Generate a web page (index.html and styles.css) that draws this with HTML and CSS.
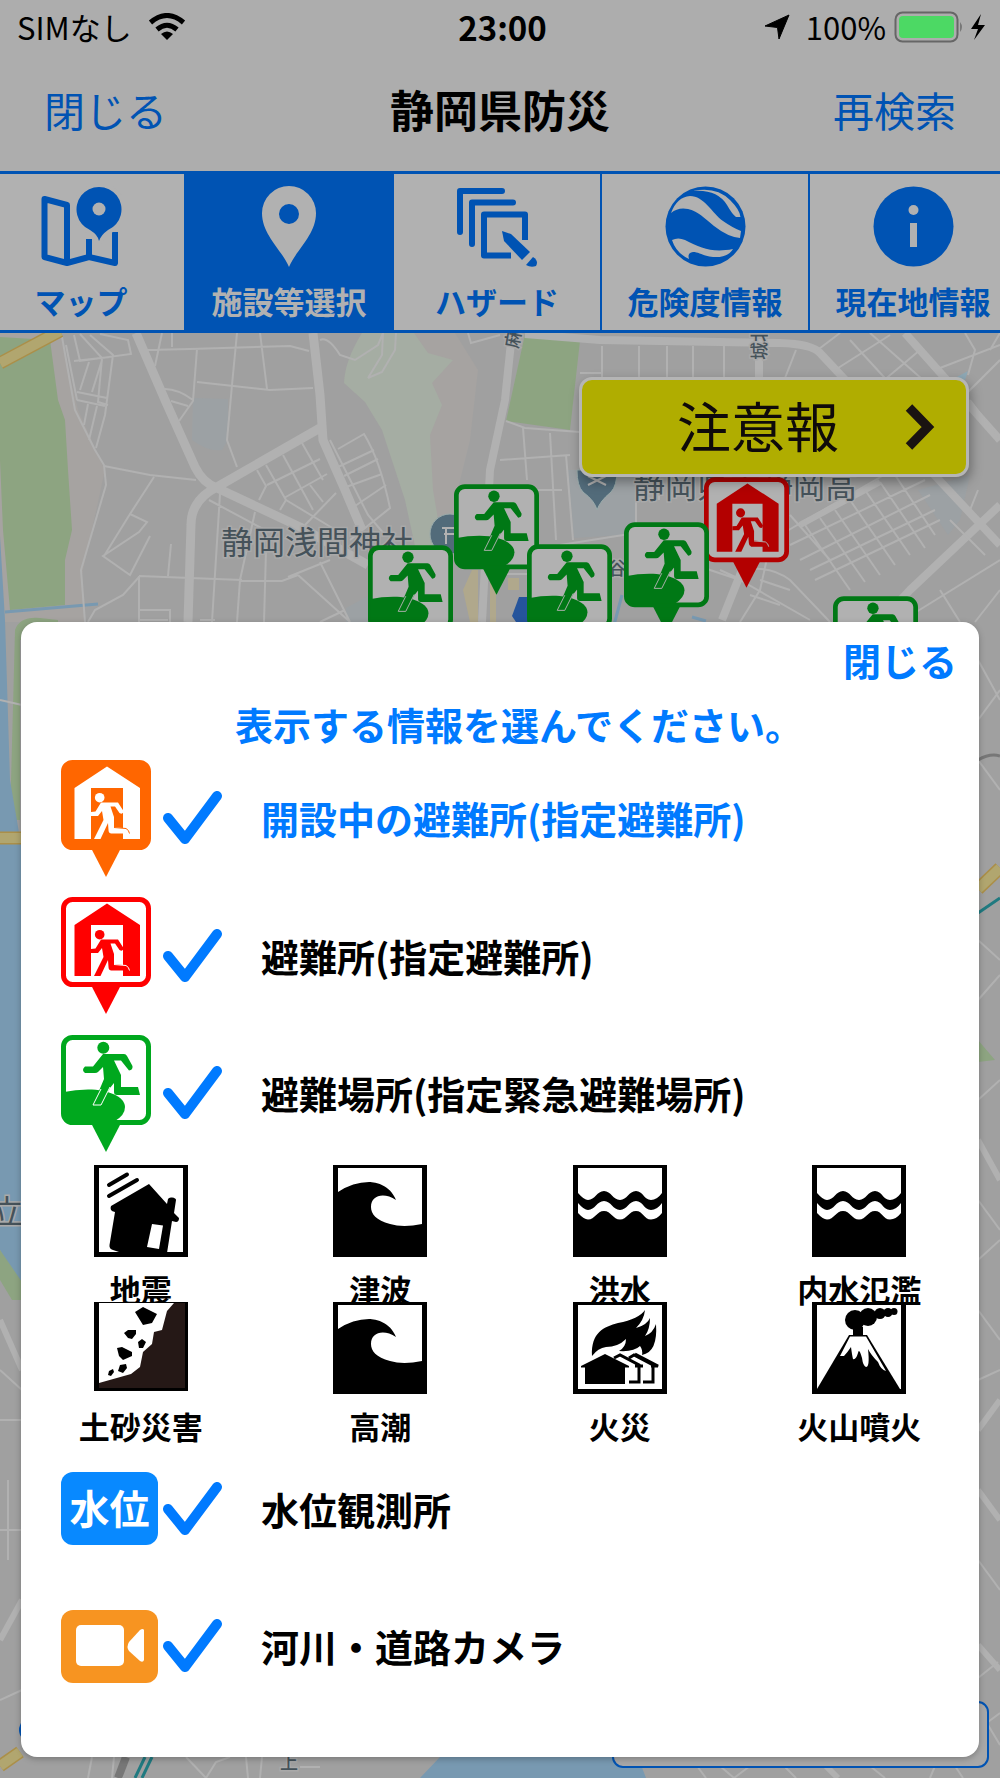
FILE: index.html
```html
<!DOCTYPE html>
<html lang="ja">

<head>
    <meta charset="UTF-8">
    <meta name="viewport" content="width=device-width, initial-scale=1.0">
    <title>静岡県防災</title>
    <link rel="stylesheet" href="styles.css">
</head>

<body>
    <!-- shared icons -->
    <svg class="defs" aria-hidden="true">
        <symbol id="pin-shelter" viewBox="0 0 90 117">
            <path d="M30 88H60L45 117Z" fill="currentColor" />
            <rect x="2.500" y="2.500" width="85" height="85" rx="9" class="pin-inside" stroke="currentColor" stroke-width="5" />
            <path class="pin-mark" d="M46 6.500L79 28V79H62V28H30V79H13.500V28Z" />
            <g class="pin-mark">
                <circle cx="38.700" cy="37.700" r="4.800" />
                <path d="M40 42.500H57L62.500 51Q62 55 58.500 53L54 46.500H49.500L53 57V67L66 68.500Q70 71 68.500 73.500H50Q47.500 73 47.500 70L47 63L39.500 79H33L42.500 60L41 51L37 56H30V52L34.500 51.500Z" />
            </g>
            <path d="M53 67.500L65 68.500Q68 70 68.500 73.500" fill="none" class="pin-line" />
        </symbol>
        <symbol id="pin-area" viewBox="0 0 90 117">
            <path d="M30 88H60L45 117Z" fill="currentColor" />
            <rect x="2.500" y="2.500" width="85" height="85" rx="9" class="pin-inside" stroke="currentColor" stroke-width="5" />
            <path d="M3 57Q14 54.500 27 54.500C48 54.500 64 62 64 72Q64 80 54 86H10Q3 86 3 78Z" fill="currentColor" />
            <g fill="currentColor">
                <circle cx="42.300" cy="12.700" r="6" />
                <path d="M42 19H63Q65 19 66 21L71.500 31Q72 35 68 35.500L60 25.500H53L60 40V52H77L79 60H56Q53 60 53 57V48L49 53L40 70H32L43 44L42 32L37 37Q36 38 34 38H24Q20 35 24 31.500H32Z" />
            </g>
            <path d="M49 52L40 70H32L40 54" fill="none" class="pin-line" />
        </symbol>
        <symbol id="wave" viewBox="0 0 94 92">
            <path d="M0 0H94V92H0Z" />
            <path fill="#fff" d="M5 3H89V59Q70 63 57 59C43 55 38 49 38 42C38 30 51 27 63 35C57 20 43 17 36 17Q20 17 5 27Z" />
        </symbol>
        <symbol id="flood" viewBox="0 0 94 92">
            <path d="M0 0H94V92H0Z" />
            <path fill="#fff" d="M5 3H89V28Q84 35 78 35C71 35 70 26 63 26S54 35 47 35S38 26 31 26S22 35 15 35Q11 35 5 28Z" />
            <path fill="#fff" d="M5 38Q11 45 15 45C22 45 24 36 31 36S40 45 47 45S56 36 63 36S71 45 78 45Q84 45 89 38V48Q84 54.500 78 54.500C71 54.500 70 46 63 46S54 54.500 47 54.500S38 46 31 46S22 54.500 15 54.500Q11 54.500 5 48Z" />
        </symbol>
    </svg>

    <header class="top">
        <div class="status">
            <div class="status-left">
                <span>SIMなし</span>
                <svg width="38" height="28" viewBox="0 0 38 28" fill="none" stroke="#000" stroke-width="5">
                    <path d="M2.500 9.500Q19-4.500 35.500 9.500" />
                    <path d="M9 16.500Q19 8 29 16.500" />
                    <path d="M19 27L13 21Q19 16 25 21Z" fill="#000" stroke="none" />
                </svg>
            </div>
            <span class="clock">23:00</span>
            <div class="status-right">
                <svg width="26" height="26" viewBox="0 0 26 26">
                    <path d="M25 1L15 25L13.500 13.500L1 12Z" stroke="#000" stroke-linejoin="round" />
                </svg>
                <span>100%</span>
                <svg width="94" height="32" viewBox="0 0 94 32">
                    <rect x="1.500" y="1.500" width="62" height="29" rx="7" fill="none" stroke="#666" stroke-width="2" />
                    <rect x="5" y="5" width="55" height="22" rx="4" fill="#4cd964" />
                    <path d="M66 11Q70 16 66 21Z" fill="#777" />
                    <path d="M87 3L77 18H84L80 29L91 14H84Z" />
                </svg>
            </div>
        </div>
        <div class="navbar">
            <button type="button" class="nav-button">閉じる</button>
            <h1>静岡県防災</h1>
            <button type="button" class="nav-button">再検索</button>
        </div>
    </header>

    <div class="tabs-clip">
        <nav class="tabs">
            <button type="button" class="tab">
                <svg width="81" height="81" viewBox="0 0 81 81" fill="none" stroke="currentColor" stroke-width="6" stroke-linejoin="round">
                    <path d="M26 77L3.500 71V13L26 19ZL48 71L74 77V46" />
                    <path d="M48 53V71" />
                    <path d="M58 55Q57 49 49 44A22.500 22.500 0 1 1 67 44Q60 49 58 55Z" fill="currentColor" stroke="#b1b1b1" stroke-width="8" />
                    <path d="M58 55Q57 49 49 44A22.500 22.500 0 1 1 67 44Q60 49 58 55Z" fill="currentColor" stroke="none" />
                    <circle cx="58" cy="23" r="6.500" fill="#b1b1b1" stroke="none" />
                </svg>
                <span>マップ</span>
            </button>
            <button type="button" class="tab active">
                <svg width="54" height="81" viewBox="0 0 54 81" fill="currentColor">
                    <path fill-rule="evenodd" d="M27 81C20 64 0 49 0 27A27 27 0 0 1 54 27C54 49 34 64 27 81ZM27 18A10 10 0 1 0 27 38A10 10 0 1 0 27 18Z" />
                </svg>
                <span>施設等選択</span>
            </button>
            <button type="button" class="tab">
                <svg width="81" height="81" viewBox="0 0 81 81" fill="none" stroke="currentColor" stroke-width="6" stroke-linecap="round" stroke-linejoin="round">
                    <path d="M3 46V5H45M15 58V16.500H56" />
                    <path d="M68 54V28.500H27V69.500H54" stroke-linecap="butt" />
                    <path d="M45 45L54 48L73 66L65 74L47 55Z" fill="currentColor" stroke="none" />
                    <path d="M76 71Q82 75 79 80Q74 82 69 79Z" fill="currentColor" stroke="none" />
                </svg>
                <span>ハザード</span>
            </button>
            <button type="button" class="tab">
                <svg width="81" height="81" viewBox="0 0 81 81">
                    <circle cx="40.500" cy="40.500" r="40" fill="currentColor" />
                    <g fill="#b1b1b1">
                        <path d="M6 27Q12 11 25 10C39 10 47 27 58 35Q68 42 76 45L75 52Q63 51 49 40C39 32 33 25 23 23Q13 21 6 27Z" />
                        <path d="M28 5Q51 0 65 14Q75 24 75.500 31H71Q67 28 62 19Q52 3 28 5Z" />
                        <path d="M7 54Q13 51 20 54C36 62 47 67 68 63Q63 72 48 71C38 70 34 66 28 66Q22 67 24 73Q11 67 7 54Z" />
                    </g>
                </svg>
                <span>危険度情報</span>
            </button>
            <button type="button" class="tab">
                <svg width="81" height="81" viewBox="0 0 81 81">
                    <circle cx="40.500" cy="40.500" r="40" fill="currentColor" />
                    <circle cx="40.500" cy="24" r="5" fill="#b1b1b1" />
                    <path d="M37 37H44V61H37Z" fill="#b1b1b1" />
                </svg>
                <span>現在地情報</span>
            </button>
        </nav>
    </div>

    <main class="map-area">
        <svg class="map" viewBox="0 333 1000 1445" preserveAspectRatio="xMidYMin slice" aria-hidden="true">
            <rect y="333" width="1000" height="1445" fill="#a0a0a0" />
            <!-- land -->
            <path fill="#a6a3a1" d="M0 333H60L78 410L105 470L82 575L85 622H0Z" />
            <path fill="#a6a3a1" d="M410 333H455L478 370L470 440L455 500V560H420Z" />
            <path fill="#8da481" d="M0 337L50 340L58 400L65 420L68 470L72 530L65 560V605L10 610L3 530L0 460Z" />
            <path fill="#8da481" d="M15 630Q20 616 40 618L58 620V640H20V820H10Z" />
            <path fill="#a5ada3" d="M362 333H414L428 353L453 360L432 383L442 405L430 435L433 490L445 560H418L405 500L382 430L365 402L344 383Q345 360 362 333Z" />
            <path fill="#8da481" d="M525 334L580 341L570 430L506 421Z" />
            <path fill="#9ca1a4" d="M193 398L228 399V440L222 450Q208 452 192 440Z" />
            <path fill="#9ca1a4" d="M568 470H637V534L574 538ZM918 490L970 475L960 520L948 535ZM346 608L368 596V622H346Z" />
            <path fill="#8ea8b5" d="M955 378L968 371L965 380Z" />
            <path fill="#b0a88c" d="M472 570H478V622H470L463 590ZM490 570V622H496V570ZM508 578H519V590H508Z" />
            <!-- water -->
            <path fill="#7899b1" d="M0 536L5 620L10 780L22 850V1290L0 1250ZM560 1757H638L646 1778H420L440 1757Z" />
            <path d="M5 612L98 604M622 595L614 625M692 617L706 621" fill="none" stroke="#7899b1" stroke-width="3" />
            <path fill="#8da481" d="M0 1250L22 1282V1300H12L0 1280ZM978 1040L995 1060L978 1062Z" />
            <!-- main roads -->
            <g fill="none" stroke="#b1b1b1" stroke-linejoin="round">
                <path stroke-width="9" d="M136 333L165 400L195 467Q203 483 217 488L300 527L368 565M217 487L320 428M313 333L320 395L323 440L345 490L362 530M217 487Q191 500 191 525L188 622" />
                <path stroke-width="8" d="M512 333L505 400L490 470L482 622M525 334L600 340L780 343Q812 344 820 353L1000 545M905 333L1000 440M759 340V378M722 620L742 570M1000 505L910 590L880 622" />
                <path stroke-width="6" d="M978 1140L1000 1180M978 1430L1000 1400M978 1490L1000 1520M978 1645L1000 1670M0 1320L22 1370M0 1640L22 1600M820 1760L838 1778M800 525L880 482" />
            </g>
            <!-- side streets -->
            <g fill="none" stroke="#b1b1b1" stroke-width="2">
                <path d="M62 337L75 410L95 450L104 465L106 485L81 570L85 622M66 345L77 400M74 335L80 361L131 354L128 340L100 334M80 334L102 358L98 402L108 405M90 335L113 355L105 415L96 448M74 361L110 357M89 362L80 390M102 360L92 392M77 392L107 398M77 400L105 406M88 404L84 425M97 406L89 440" />
                <path d="M148 350L190 349L290 346L309 351M162 333L155 366M172 333V347M197 349L193 401L179 421M165 389Q178 389 193 400M171 401L188 406M197 382L270 390L313 388M237 333L232 385L227 440L237 467M260 333L267 389M320 340Q328 336 340 355L355 360L378 345L383 333M383 333L382 355L368 378M396 333L395 350L382 372L368 378M468 333L471 343L500 335" />
                <path d="M104 466L150 475L196 480M154 477L130 514L147 522L139 532L103 556L130 575L150 536M130 514L104 556M139 576L242 580M220 494L212 622M209 500L265 530M255 512L240 580L237 622M266 550L264 622M171 544L168 576M139 576V622M139 577L123 595L95 610L88 622M139 610H170V622M140 620H168M200 620H215" />
                <path d="M257 470L266 486L259 500M266 465L286 500L280 510M283 455L313 510M302 443L323 480M267 485L320 459M284 498L327 474M286 500L334 529M305 525L336 493M310 485L323 502M330 440L368 515L385 535M338 449L364 434Q380 460 390 508L350 540M338 467L374 450M344 476L378 459M346 487L382 474M355 506L386 485M298 575L350 622M320 562L350 622M298 575L282 581H240M345 610L320 622M288 577L330 560" />
                <path d="M580 373H602M602 346V380M639 346V380M667 346V380M693 346V380M724 346V380M506 421L525 428L580 432M523 428L527 480M550 433L556 540M500 460L570 455M566 455L573 540M500 490H562M560 545L636 533M636 480V534M659 480V500M500 574H530M680 560L740 580L810 620M742 580L720 570" />
                <path d="M840 333L815 352M796 350L785 378M850 340L905 400M870 333L940 395M920 350L870 392M890 335L835 370M965 333L975 350L968 375M1000 345L940 368M1000 360L960 400M970 400L1000 440M1000 333L990 350" />
                <path d="M780 535L910 460M790 545L925 480M800 560L930 495M810 570L935 510M815 580L940 520M805 525L850 590M820 518L865 582M835 510L880 575M850 500L895 565M865 490L910 555M880 482L925 548M895 475L935 535M745 570Q770 565 790 580L830 622M770 545L760 590L740 622M790 590L760 580M780 605L750 595M790 515L830 560M950 520L985 555M970 510L978 490M1000 560L900 622M940 590L960 622M1000 590L975 622" />
                <path d="M978 660L1000 700M978 720L1000 690M978 760L1000 790M978 940L1000 960M978 1000L1000 975M978 1100L1000 1080M978 1200L1000 1230M978 1260L1000 1240M978 1310L1000 1340M978 1380L1000 1370M978 1560L1000 1590M978 1678L998 1662M988 1725L1000 1745M988 1722L1000 1713M0 700L22 705M0 1370L22 1390M0 1420H22M8 1480V1560M0 1530H22M0 1700L22 1690" />
                <path d="M92 1757L88 1778M114 1757L112 1778M125 1757L122 1778M186 1757L206 1778L216 1762L230 1757M246 1757L248 1778M262 1757L260 1778M300 1767H320M697 1766L706 1778M720 1766L734 1778L750 1766M784 1766L796 1778M870 1766L885 1778M930 1778L935 1766M955 1766L963 1778" />
            </g>
            <g fill="none">
                <path d="M0 363L60 331M0 838H22M978 889L1000 868M0 1766L20 1752" stroke="#ab8f49" stroke-width="13" />
                <path d="M0 363L60 331M0 838H22M978 889L1000 868M0 1766L20 1752" stroke="#b1a66f" stroke-width="10" />
                <path d="M978 913L1000 898M135 1778L145 1757M142 1778L152 1757" stroke="#207a80" stroke-width="3" />
                <path d="M118 1778L126 1757" stroke="#777" stroke-width="8" />
                <path d="M978 760Q990 753 1000 756" stroke="#777" stroke-width="3" />
            </g>
            <!-- place names -->
            <g class="place">
                <text x="221" y="554">静岡浅間神社</text>
                <text x="633" y="498">静岡県立静岡高</text>
                <text x="-41" y="1223">県立</text>
            </g>
            <g class="place small">
                <text x="766" y="360" transform="rotate(-90 766 360)">城北</text>
                <text x="518" y="349" transform="rotate(-80 518 349)">麻機</text>
                <text x="608" y="575">谷通</text>
                <text x="280" y="1769">上</text>
            </g>
            <circle cx="450" cy="534" r="20" fill="#526b7a" stroke="#9aa" />
            <path d="M442 528H460M444 534H458M446 528V544" stroke="#b1b1b1" stroke-width="2" />
            <path d="M597 510Q595 501 583 492Q577 486 577 470H617Q617 486 611 492Q600 501 597 510Z" fill="#526b7a" stroke="#9aa" />
            <path d="M588 476L606 485M606 476L588 485" stroke="#b1b1b1" stroke-width="2" />
            <path d="M519 597H540V622H516L512 616Z" fill="#25549c" />
            <circle cx="31" cy="1730" r="12" fill="#0053b3" />
            <rect x="613" y="1702" width="375" height="65" rx="10" fill="#a8a8a8" stroke="#0053b3" stroke-width="2" />
            <!-- facilities -->
            <g class="pin dim green">
                <use href="#pin-area" x="454" y="484" width="85" height="111" />
                <use href="#pin-area" x="368" y="545" width="85" height="111" />
                <use href="#pin-area" x="527" y="544" width="85" height="111" />
                <use href="#pin-area" x="833" y="596" width="85" height="111" />
            </g>
            <g class="pin dim red">
                <use href="#pin-shelter" x="704" y="477" width="85" height="111" />
            </g>
            <g class="pin dim green">
                <use href="#pin-area" x="624" y="522" width="85" height="111" />
            </g>
        </svg>

        <button type="button" class="alert">
            <span>注意報</span>
            <svg width="30" height="46" viewBox="0 0 30 46" fill="none" stroke="#1a1311" stroke-width="9">
                <path d="M4 3.500L23 23L4 42.500" />
            </svg>
        </button>

        <section class="panel">
            <button type="button" class="panel-close">閉じる</button>
            <h2>表示する情報を選んでください。</h2>
            <div class="list">
                <label class="row with-pin highlight">
                    <svg class="pin filled" width="90" height="117"><use href="#pin-shelter" /></svg>
                    <input type="checkbox" class="check" checked>
                    <span>開設中の避難所(指定避難所)</span>
                </label>
                <label class="row with-pin">
                    <svg class="pin red" width="90" height="117"><use href="#pin-shelter" /></svg>
                    <input type="checkbox" class="check" checked>
                    <span>避難所(指定避難所)</span>
                </label>
                <label class="row with-pin">
                    <svg class="pin green" width="90" height="117"><use href="#pin-area" /></svg>
                    <input type="checkbox" class="check" checked>
                    <span>避難場所(指定緊急避難場所)</span>
                </label>
                <ul class="hazards">
                    <li>
                        <svg width="94" height="92" viewBox="0 0 94 92">
                            <path d="M0 0H94V92H0Z" />
                            <path fill="#fff" d="M5 3H89V87H5Z" />
                            <path d="M15 20L33 9.500M15 31L43 15" stroke="#000" stroke-width="4" stroke-linecap="round" />
                            <path d="M17 41L55 19L73 39L74 34Q75 32 78 32.500Q82 33 82 35L80 48L85 53Q85 57 82 57L78 56L73 88H28L19 85Q15 84 15.500 80L21 47Q15 46 17 41Z" />
                            <path fill="#fff" d="M58 59L69 60.500L65 84L53 82Z" />
                        </svg>
                        <span>地震</span>
                    </li>
                    <li>
                        <svg width="94" height="92"><use href="#wave" /></svg>
                        <span>津波</span>
                    </li>
                    <li>
                        <svg width="94" height="92"><use href="#flood" /></svg>
                        <span>洪水</span>
                    </li>
                    <li>
                        <svg width="94" height="92"><use href="#flood" /></svg>
                        <span>内水氾濫</span>
                    </li>
                    <li>
                        <svg width="94" height="92" viewBox="0 0 94 92">
                            <path d="M0 0H94V89H0Z" />
                            <path fill="#fff" d="M5 1H91V86H5Z" />
                            <path fill="#251816" d="M80 1L73 9L68 28L60 30L58 42L49 50L46 65L37 72L5 81V86H91V1Z" />
                            <path d="M41 10L49 5L63 12L58 21L49 23ZM30 31L34 28L42 28L42 32L38 37L34 36ZM44 40L48 37L52 40L49 46L45 46ZM23 46L28 45L38 50L38 54L29 58L25 54ZM26 63L32 62L33 66L29 71L24 69ZM15 69L19 67L20 70L17 74L14 73Z" />
                        </svg>
                        <span>土砂災害</span>
                    </li>
                    <li>
                        <svg width="94" height="92"><use href="#wave" /></svg>
                        <span>高潮</span>
                    </li>
                    <li>
                        <svg width="94" height="92" viewBox="0 0 94 92">
                            <path d="M0 0H94V92H0Z" />
                            <path fill="#fff" d="M5 3H89V87H5Z" />
                            <path d="M19 54C18 30 31 25 45 21Q66 17 72 8Q71 18 63 26Q74 23 77 16Q77 27 72 34Q80 31 83 22Q85 50 69 53Q70 48 67 44Q61 50 46 49Q53 45 53 37Q45 45 33 45Q25 46 19 54Z" />
                            <path d="M8 64L32 52L56 64V65.500H52V82H12V65.500H8Z" />
                            <path d="M41 56L47 53L66 63V80H56M56 56L61 53L80 63V80H70M62 64H70M78 64H85L62 52" fill="none" stroke="#000" stroke-width="3" />
                        </svg>
                        <span>火災</span>
                    </li>
                    <li>
                        <svg width="94" height="92" viewBox="0 0 94 92">
                            <path d="M0 0H94V92H0Z" />
                            <path fill="#fff" d="M5 3H89V87H5Z" />
                            <circle cx="43" cy="18" r="10" />
                            <circle cx="56" cy="15" r="9" />
                            <circle cx="68" cy="11.500" r="5.500" />
                            <circle cx="76" cy="10.500" r="4.500" />
                            <circle cx="82" cy="9.500" r="3.500" />
                            <path d="M41 25H51V33H41Z" />
                            <path d="M37 33H55L88 87H5Z" />
                            <path fill="#fff" d="M38 34.500H54L74 69Q69 68 66 60Q59 53 56 47Q58 65 54 65Q51 64 50 56Q47 45 46 51Q44 58 41 57Q40 53 39 45Q35 51 32 54L28 54Z" />
                        </svg>
                        <span>火山噴火</span>
                    </li>
                </ul>
                <label class="row">
                    <span class="badge">水位</span>
                    <input type="checkbox" class="check" checked>
                    <span>水位観測所</span>
                </label>
                <label class="row">
                    <span class="badge camera">
                        <svg width="70" height="42" viewBox="0 0 70 42" fill="#fff">
                            <rect x="1" y="0" width="48" height="41" rx="5" />
                            <path d="M69 5V35Q68 38 65 36L54 26Q51 22 54 17L65 5Q68 3 69 5Z" />
                        </svg>
                    </span>
                    <input type="checkbox" class="check" checked>
                    <span>河川・道路カメラ</span>
                </label>
            </div>
        </section>
    </main>
</body>

</html>
```
FILE: styles.css
```css
* {
    margin: 0;
    padding: 0;
    box-sizing: border-box;
}

body {
    min-height: 100vh;
    display: flex;
    flex-direction: column;
    background: #adadad;
    color: #000;
    font-family: "Noto Sans CJK JP", "Noto Sans", sans-serif;
    overflow-x: hidden;
}

button {
    border: none;
    background: none;
    font-family: inherit;
    cursor: pointer;
}

svg {
    display: block;
    flex: none;
}

.defs {
    position: absolute;
    width: 0;
    height: 0;
}

/* status bar and title */
.status {
    display: grid;
    grid-template-columns: 1fr auto 1fr;
    align-items: center;
    height: 54px;
    padding: 0 12px 0 17px;
    font-size: 31px;
    line-height: 52px;
}

.status-left,
.status-right {
    display: flex;
    align-items: center;
    gap: 16px;
}

.status-right {
    justify-content: flex-end;
}

.status-right span {
    margin-right: -8px;
}

.clock {
    font-size: 33px;
    font-weight: bold;
}

.navbar {
    display: grid;
    grid-template-columns: 1fr auto 1fr;
    align-items: center;
    height: 117px;
    padding: 0 44px 8px;
}

.navbar h1 {
    font-size: 44px;
    line-height: 64px;
}

.nav-button {
    justify-self: start;
    color: #0053b3;
    font-size: 41px;
    font-weight: 400;
    line-height: 60px;
}

.nav-button:last-child {
    justify-self: end;
}

/* tabs, the row runs past both edges */
.tabs-clip {
    overflow: hidden;
    border-top: 3px solid #0053b3;
    border-bottom: 3px solid #0053b3;
    background: #b1b1b1;
}

.tabs {
    display: flex;
    width: calc(100% + 40px);
    margin-left: -22px;
}

.tab {
    flex: 1;
    display: flex;
    flex-direction: column;
    align-items: center;
    gap: 12px;
    height: 156px;
    padding-top: 12px;
    border-right: 2px solid #0053b3;
    color: #0053b3;
    font-size: 31px;
    font-weight: bold;
    line-height: 44px;
}

.tab.active {
    background: #0053b3;
    color: #b1b1b1;
}

/* map */
.map-area {
    flex: 1;
    display: flex;
    flex-direction: column;
    position: relative;
    padding: 44px 21px 21px;
}

.map {
    position: absolute;
    left: 0;
    top: 0;
    width: 100%;
    height: 100%;
}

.place {
    fill: #45525a;
    font-size: 32px;
    stroke: #a9a9a9;
    stroke-width: 3px;
    paint-order: stroke;
}

.place.small {
    font-size: 18px;
    font-weight: 500;
}

.pin {
    --inside: #fff;
    --line: #fff;
    color: #00a81e;
}

.pin-inside {
    fill: var(--inside);
}

.pin-mark {
    fill: var(--mark, currentColor);
}

.pin-line {
    stroke: var(--line);
    stroke-width: 1px;
}

.pin.red {
    color: #f00;
}

.pin.filled {
    --inside: #f60;
    --mark: #fff;
    --line: #f60;
    color: #f60;
}

.pin.dim {
    --inside: #b1b1b1;
    --line: #b1b1b1;
    color: #007815;
}

.pin.dim.red {
    color: #b30000;
}

.alert {
    position: relative;
    display: flex;
    align-items: center;
    justify-content: flex-end;
    gap: 66px;
    align-self: flex-end;
    width: 390px;
    height: 100px;
    margin-right: 10px;
    padding-right: 31px;
    border: 3px solid #b5b5b5;
    border-radius: 13px;
    background: #b0ad00;
    box-shadow: 2px 5px 12px rgba(0, 0, 0, 0.35);
    color: #0f0a0a;
    font-size: 54px;
    line-height: 80px;
}

.alert span {
    padding-bottom: 4px;
}

/* selection panel */
.panel {
    position: relative;
    flex: 1;
    display: flex;
    flex-direction: column;
    margin-top: 145px;
    border-radius: 16px;
    background: #fff;
    box-shadow: 0 2px 6px rgba(0, 0, 0, 0.25);
}

.panel-close {
    align-self: flex-end;
    margin: 10px 22px 0 0;
    color: #007aff;
    font-size: 38px;
    font-weight: bold;
    line-height: 56px;
}

.panel h2 {
    padding-left: 38px;
    margin: 8px 0 0;
    color: #007aff;
    font-size: 38px;
    font-weight: bold;
    line-height: 56px;
    text-align: center;
}

.list {
    display: grid;
    grid-template-rows: repeat(7, 1fr);
    height: 963px;
}

.row {
    display: grid;
    grid-template-columns: 102px 98px 1fr;
    align-items: center;
    padding-left: 40px;
    font-size: 38px;
    font-weight: bold;
    line-height: 56px;
}

.with-pin {
    padding-bottom: 5px;
}

.highlight {
    color: #007aff;
}

.check {
    appearance: none;
    width: 60px;
    height: 54px;
    background: url("data:image/svg+xml,%3Csvg xmlns='http://www.w3.org/2000/svg' viewBox='0 0 60 54'%3E%3Cpath d='M5 27L22 48L54 5' fill='none' stroke='%23dddddd' stroke-width='10' stroke-linecap='round' stroke-linejoin='round'/%3E%3C/svg%3E") no-repeat center;
    cursor: pointer;
}

.check:checked {
    background-image: url("data:image/svg+xml,%3Csvg xmlns='http://www.w3.org/2000/svg' viewBox='0 0 60 54'%3E%3Cpath d='M5 27L22 48L54 5' fill='none' stroke='%23007aff' stroke-width='10' stroke-linecap='round' stroke-linejoin='round'/%3E%3C/svg%3E");
}

.badge {
    display: flex;
    align-items: center;
    justify-content: center;
    width: 97px;
    height: 73px;
    padding-bottom: 4px;
    border-radius: 12px;
    background: #0889ff;
    color: #fff;
    font-size: 40px;
}

.camera {
    padding-bottom: 0;
    background: #f79421;
}

.hazards {
    grid-row: span 2;
    display: grid;
    grid-template-columns: repeat(4, 1fr);
    grid-template-rows: repeat(2, 1fr);
    min-height: 0;
    list-style: none;
}

.hazards li {
    display: flex;
    flex-direction: column;
    align-items: center;
    gap: 10px;
    min-height: 0;
    font-size: 31px;
    font-weight: bold;
    line-height: 44px;
}

.hazards svg {
    position: relative;
}
```
